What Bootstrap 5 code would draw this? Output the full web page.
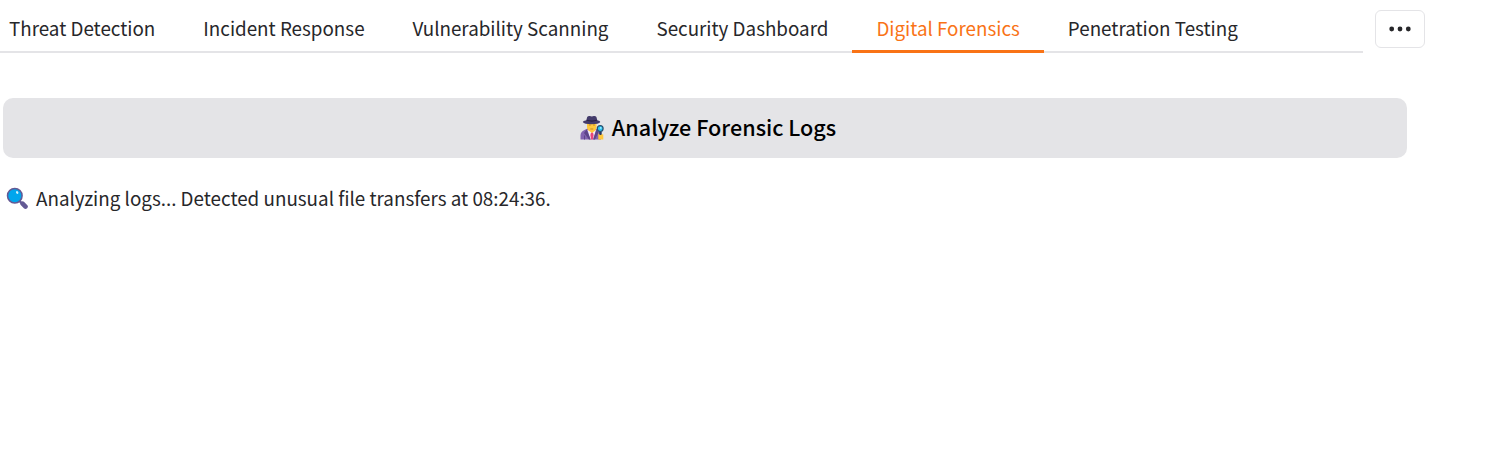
<!DOCTYPE html>
<html lang="en">
<head>
<meta charset="utf-8">
<meta name="viewport" content="width=device-width, initial-scale=1">
<title>Digital Forensics</title>
<link href="https://cdn.jsdelivr.net/npm/bootstrap@5.3.0/dist/css/bootstrap.min.css" rel="stylesheet">
<style>
body{font-family:"Noto Sans CJK SC","Noto Sans",sans-serif;color:#27272a;font-size:18.82px;line-height:30px;overflow:hidden}
.tab-strip{width:1363px;height:53px;font-size:18.81px;box-shadow:inset 0 -2px #e4e4e7}
.tab-strip .nav-link{height:53px;padding:13px 24px 0;color:#27272a;border-radius:0;white-space:nowrap}
.tab-strip .nav-item:first-child .nav-link{padding-left:9px}
.tab-strip .nav-link.active{color:#f97316;box-shadow:inset 0 -3px #f97316}
.more-btn{width:50px;height:38px;margin:10px 0 0 12px;border:1px solid #e4e4e7;border-radius:6px}
.main-col{width:1404px;margin:45px 0 0 3px}
.run-btn{height:60px;background:#e4e4e7;border:0;border-radius:10px;color:#000;font-size:21.6px;font-weight:500;line-height:30px}
.run-btn .run-label{padding-bottom:2px}
.run-btn .run-group{margin-left:6px}
.log-line{margin:25px 0 0 3px}
</style>
</head>
<body class="bg-white">
<header class="d-flex align-items-start">
  <ul class="nav flex-nowrap tab-strip" role="tablist">
    <li class="nav-item"><a class="nav-link" href="#">Threat Detection</a></li>
    <li class="nav-item"><a class="nav-link" href="#">Incident Response</a></li>
    <li class="nav-item"><a class="nav-link" href="#">Vulnerability Scanning</a></li>
    <li class="nav-item"><a class="nav-link" href="#">Security Dashboard</a></li>
    <li class="nav-item"><a class="nav-link active" href="#">Digital Forensics</a></li>
    <li class="nav-item"><a class="nav-link" href="#">Penetration Testing</a></li>
  </ul>
  <button class="more-btn bg-white p-0 d-flex align-items-center justify-content-center" aria-label="More tabs">
    <svg width="24" height="8" viewBox="0 0 24 8" fill="#27272a"><circle cx="3.7" cy="4" r="2.4"/><circle cx="12" cy="4" r="2.4"/><circle cx="20.3" cy="4" r="2.4"/></svg>
  </button>
</header>
<main class="main-col">
  <button class="run-btn w-100 p-0 d-flex align-items-center justify-content-center">
    <span class="run-group d-flex align-items-center">
    <svg class="me-2" width="24" height="26" viewBox="0 0 24 26">
      <path d="M.5 24.500v-4q0-4 4-5.500l3-1.500h8l3 1.500q2.500 1 2.500 5v4.500z" fill="#8263b0"/>
      <path d="M7.500 15l3 9.500h2.500l3-9.500z" fill="#f3eef8"/>
      <path d="M11 17.500h2l.6 2.500-.6 4.500h-2l-.6-4.500z" fill="#e8467c"/>
      <path d="M6.500 14.500l4.200 10H9l-5-6.500zM16.500 14.500l-3.300 10h1.800l3.500-7zM4 20.500h1v4H4z" fill="#5d4589"/>
      <path d="M7 7h9.500v5q0 3-2.500 4.500l-2 1.500-2-1.500Q7 15 7 12z" fill="#ffc83d"/>
      <path d="M8.800 10h2M13 10h2M10.300 14h3" stroke="#c58a29" fill="none"/>
      <path d="M2.800 7q0-1 3.500-1.700l.9-3.200Q8 .7 9.800 1l2 .5 2-.5q1.800-.3 2.600 1.100l.9 3.200q3 .7 3 1.700-1.500 2.200-8.800 2.200T2.800 7z" fill="#433b6b"/>
      <path d="M6.800 5.300q5 1.500 10 0" stroke="#2b2147" stroke-width="1.200" fill="none"/>
      <path d="M20.500 16.500v4.500" stroke="#28395e" stroke-width="2"/>
      <path d="M18.300 18.500l1.700 1 1-.5 2.300.5v5h-5z" fill="#ffc83d"/>
      <path d="M20.500 16.500v3.500" stroke="#28395e" stroke-width="1.800"/>
      <circle cx="20.200" cy="13.600" r="2.900" fill="#26c4f4" stroke="#28506e" stroke-width="1.200"/>
      <circle cx="20.700" cy="12.900" r=".9" fill="#a9eeff"/>
    </svg>
    <span class="run-label">Analyze Forensic Logs</span>
    </span>
  </button>
  <p class="log-line d-flex align-items-center">
    <svg class="me-2" width="22" height="24" viewBox="0 0 22 24">
      <path d="M13.500 15l4 4" stroke="#635994" stroke-width="2.400"/>
      <path d="M16.600 17.700l2.900 2.900" stroke="#635994" stroke-width="4.600" stroke-linecap="round"/>
      <circle cx="8.800" cy="9.700" r="7.300" fill="#00a6ed" stroke="#635994" stroke-width="1.500"/>
      <ellipse cx="11.200" cy="6.500" rx="1.100" ry="1.500" transform="rotate(-30 11.200 6.500)" fill="#d3f1fc"/>
    </svg>
    <span>Analyzing logs... Detected unusual file transfers at 08:24:36.</span>
  </p>
</main>
<script src="https://cdn.jsdelivr.net/npm/bootstrap@5.3.0/dist/js/bootstrap.bundle.min.js"></script>
</body>
</html>
